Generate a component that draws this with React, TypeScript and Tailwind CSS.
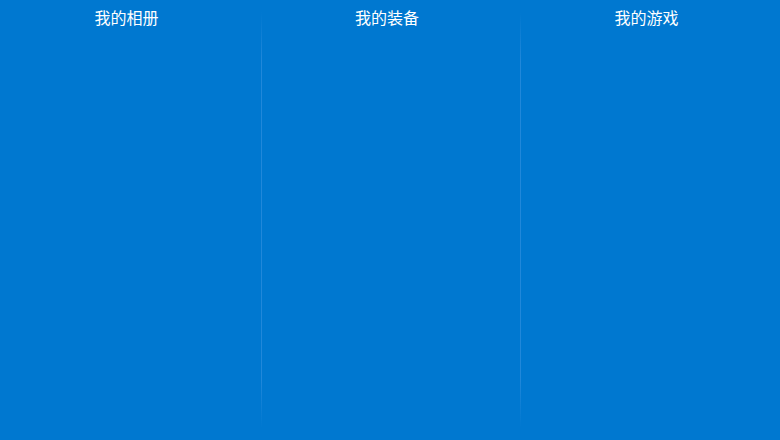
const tabs = [
    { label: "我的相册", width: "w-[261px]" },
    { label: "我的装备", width: "w-[258px]" },
    { label: "我的游戏", width: "flex-1" },
];

function Divider() {
    return (
        <div className="w-px shrink-0 pt-3 pb-3">
            <div className="h-full w-px bg-[linear-gradient(to_bottom,#0078d0,#2188da_12%,#2188da_88%,#0078d0)]"></div>
        </div>
    );
}

export default function App() {
    return (
        <div
            className="flex h-[440px] w-[780px] bg-[#0078d0] text-white"
            style={{ fontFamily: '"Noto Sans CJK SC", "Noto Sans", sans-serif' }}
        >
            {tabs.map((t, i) => (
                <div key={t.label} className="contents">
                    {i > 0 && <Divider />}
                    <div className={`${t.width} flex shrink-0 flex-col`}>
                        <div className="flex h-[33px] items-center justify-center pr-2 text-[16px] leading-none">
                            {t.label}
                        </div>
                        <div className="flex-1"></div>
                    </div>
                </div>
            ))}
        </div>
    );
}
